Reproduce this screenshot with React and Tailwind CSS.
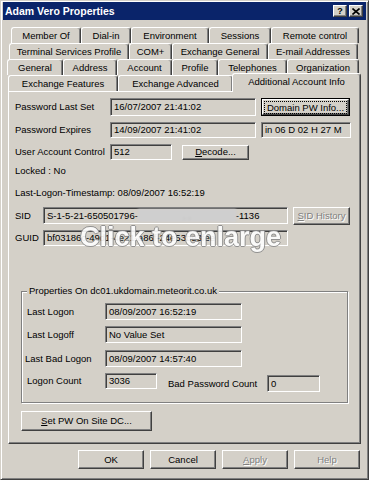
import React from 'react';
import clsx from 'clsx';

const rows = [
  { offset: 'ml-[8px]', tabs: [
    ['Member Of', 'w-[70px]'], ['Dial-in', 'w-[50px]'], ['Environment', 'w-[78px]'],
    ['Sessions', 'w-[62px]'], ['Remote control', 'w-[88px]'],
  ] },
  { offset: 'ml-[6px]', tabs: [
    ['Terminal Services Profile', 'w-[120px]'], ['COM+', 'w-[43px]'],
    ['Exchange General', 'w-[96px]'], ['E-mail Addresses', 'w-[90px]'],
  ] },
  { offset: 'ml-[4px]', tabs: [
    ['General', 'w-[56px]'], ['Address', 'w-[54px]'], ['Account', 'w-[55px]'],
    ['Profile', 'w-[46px]'], ['Telephones', 'w-[69px]'], ['Organization', 'w-[72px]'],
  ] },
];

const raised = 'bg-[#d4d0c8] border border-t-white border-l-white border-r-[#404040] border-b-[#404040] shadow-[inset_-1px_-1px_0_#808080]';
const sunken = 'bg-[#d4d0c8] border border-t-[#808080] border-l-[#808080] border-r-white border-b-white shadow-[inset_1px_1px_0_#404040,inset_-1px_-1px_0_#d4d0c8]';

function Tab({ label, w, active }) {
  return (
    <div className={clsx(
      'shrink-0 flex items-center justify-center border-t border-l border-white rounded-tl-[3px] rounded-tr-[3px] border-r border-r-[#404040] shadow-[inset_-1px_0_0_#808080] bg-[#d4d0c8]',
      w,
      active ? 'h-[19px] -mb-px relative z-10 -mx-[1px]' : 'h-[16px]'
    )}>
      <span className={clsx(active && '-mt-[2px]')}>{label}</span>
    </div>
  );
}

function Field({ w, h = 'h-[16px]', children, className }) {
  return (
    <div className={clsx(sunken, w, h, 'shrink-0 flex items-center pl-[3px] overflow-hidden whitespace-nowrap', className)}>
      {children}
    </div>
  );
}

function Button({ w, h = 'h-[18px]', children, disabled, isDefault, className }) {
  return (
    <div className={clsx(
      'shrink-0 flex items-center justify-center',
      isDefault ? 'border border-black p-0' : '',
      w, h, className
    )}>
      <div className={clsx(raised, 'w-full h-full flex items-center justify-center',
        disabled && 'text-[#808080] [text-shadow:1px_1px_0_#fff]')}>
        {isDefault ? (
          <span className="border border-dotted border-black px-[2px] leading-[11px]">{children}</span>
        ) : children}
      </div>
    </div>
  );
}

export default function App() {
  return (
    <div className="w-[369px] h-[480px] bg-[#d4d0c8] border border-t-[#d4d0c8] border-l-[#d4d0c8] border-r-[#404040] border-b-[#404040] shadow-[inset_1px_1px_0_#fff,inset_-1px_-1px_0_#808080] pt-[1px] px-[2px] text-[9.5px] text-black font-['Liberation_Sans',Arial,sans-serif] leading-none flex flex-col">
      {/* Title bar */}
      <div className="h-[18px] bg-[#0a246a] flex items-center justify-between pl-[2px] pr-[3px] shrink-0">
        <span className="text-white font-bold text-[10.5px]">Adam Vero Properties</span>
        <div className="flex gap-[2px]">
          <div className={clsx(raised, 'w-[14px] h-[12px] flex items-center justify-center font-bold text-[9px]')}>?</div>
          <div className={clsx(raised, 'w-[14px] h-[12px] flex items-center justify-center')}>
            <svg width="8" height="7" viewBox="0 0 8 7"><path d="M0.5 0.5L7.5 6.5M7.5 0.5L0.5 6.5" stroke="#000" strokeWidth="1.6" /></svg>
          </div>
        </div>
      </div>

      {/* Tabs */}
      <div className="mt-[7px] flex flex-col">
        {rows.map((r, i) => (
          <div key={i} className={clsx('flex', r.offset)}>
            {r.tabs.map(([label, w]) => <Tab key={label} label={label} w={w} />)}
          </div>
        ))}
        <div className="flex items-end ml-[5px] h-[16px]">
          <Tab label="Exchange Features" w="w-[110px]" />
          <Tab label="Exchange Advanced" w="w-[115px]" />
          <Tab label="Additional Account Info" w="w-[129px]" active />
        </div>
      </div>

      {/* Panel */}
      <div className="ml-[5px] w-[353px] h-[353px] shrink-0 border border-t-white border-l-white border-r-[#404040] border-b-[#404040] shadow-[inset_-1px_-1px_0_#808080] pl-[6px] flex flex-col">
        <div className="mt-[6px] flex items-center h-[18px]">
          <span className="w-[95px]">Password Last Set</span>
          <Field w="w-[146px]" h="h-[18px]">16/07/2007 21:41:02</Field>
          <Button w="w-[89px]" isDefault className="ml-[5px]">Domain PW Info...</Button>
        </div>
        <div className="mt-[6px] flex items-center h-[16px]">
          <span className="w-[95px]">Password Expires</span>
          <Field w="w-[146px]">14/09/2007 21:41:02</Field>
          <Field w="w-[90px]" className="ml-[5px]">in 06 D 02 H 27 M</Field>
        </div>
        <div className="mt-[6px] flex items-center h-[16px]">
          <span className="w-[95px]">User Account Control</span>
          <Field w="w-[62px]">512</Field>
          <Button w="w-[67px]" h="h-[15px]" className="ml-[10px]"><span><u>D</u>ecode...</span></Button>
        </div>
        <div className="mt-[4px] h-[14px] flex items-center">Locked : No</div>
        <div className="mt-[8px] h-[14px] flex items-center">Last-Logon-Timestamp: 08/09/2007 16:52:19</div>
        <div className="mt-[7px] flex items-start h-[18px]">
          <span className="w-[28px] h-[17px] flex items-center">SID</span>
          <Field w="w-[245px]" h="h-[17px]">
            <span>S-1-5-21-650501796-</span>
            <span className="w-[98px] h-[13px] bg-[#cfcfcf] blur-[1px] flex items-center justify-center text-[#b5b5b5]">. .</span>
            <span>-1136</span>
          </Field>
          <Button w="w-[57px]" disabled className="ml-[5px]"><span><u>S</u>ID History</span></Button>
        </div>
        <div className="mt-[5px] flex items-center h-[16px] relative">
          <span className="w-[28px]">GUID</span>
          <Field w="w-[245px]">bf03186c-49d1-4e21-a86f-24e53be3fee</Field>
          <span className="absolute left-[65px] -top-[6px] text-[27px] font-bold text-white opacity-90 [text-shadow:1px_0_0_#8a8a8a,-1px_0_0_#8a8a8a,0_1px_0_#8a8a8a,0_-1px_0_#8a8a8a]">Click to enlarge</span>
        </div>

        {/* Group box */}
        <div className="mt-[45px] ml-[6px] w-[327px] h-[112px] border border-[#808080] shadow-[1px_1px_0_#fff,inset_1px_1px_0_#fff] relative pl-[5px] flex flex-col">
          <span className="absolute -top-[6px] left-[5px] px-[2px] bg-[#d4d0c8]">Properties On dc01.ukdomain.meteorit.co.uk</span>
          <div className="mt-[11px] flex items-center h-[17px]">
            <span className="w-[78px]">Last Logon</span>
            <Field w="w-[137px]" h="h-[17px]">08/09/2007 16:52:19</Field>
          </div>
          <div className="mt-[6px] flex items-center h-[17px]">
            <span className="w-[78px]">Last Logoff</span>
            <Field w="w-[137px]" h="h-[17px]">No Value Set</Field>
          </div>
          <div className="mt-[7px] flex items-center h-[17px]">
            <span className="w-[78px] -ml-[2px] pl-0">Last Bad Logon</span>
            <Field w="w-[137px]" h="h-[17px]" className="ml-[2px]">08/09/2007 14:57:40</Field>
          </div>
          <div className="mt-[6px] flex items-start h-[19px]">
            <span className="w-[78px] h-[16px] flex items-center">Logon Count</span>
            <Field w="w-[52px]">3036</Field>
            <span className="ml-[11px] w-[99px] h-[17px] mt-[2px] flex items-center">Bad Password Count</span>
            <Field w="w-[53px]" h="h-[17px]" className="mt-[2px]">0</Field>
          </div>
        </div>

        <Button w="w-[131px]" h="h-[20px]" className="mt-[8px] ml-[6px]"><span><u>S</u>et PW On Site DC...</span></Button>
      </div>

      {/* Dialog buttons */}
      <div className="mt-[6px] flex justify-end gap-[6px] pr-[6px]">
        <Button w="w-[66px]" h="h-[19px]">OK</Button>
        <Button w="w-[66px]" h="h-[19px]">Cancel</Button>
        <Button w="w-[66px]" h="h-[19px]" disabled><span><u>A</u>pply</span></Button>
        <Button w="w-[66px]" h="h-[19px]" disabled>Help</Button>
      </div>
    </div>
  );
}
